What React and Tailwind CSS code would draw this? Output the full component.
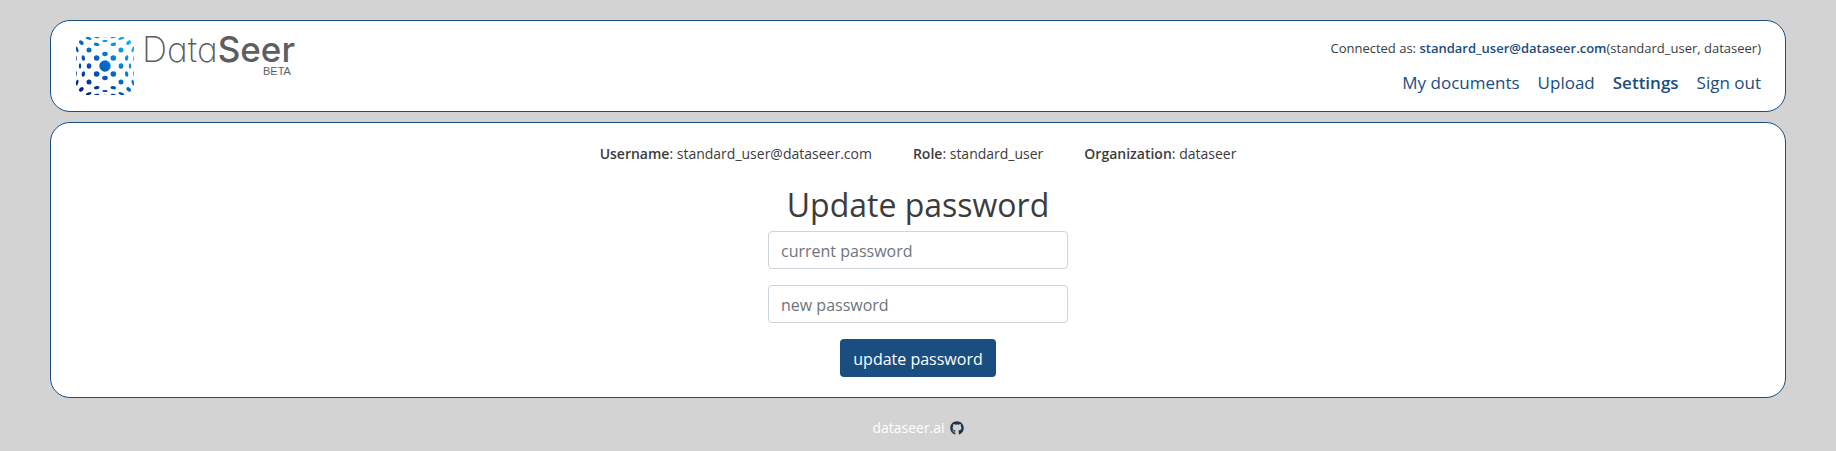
import { FaGithub } from "react-icons/fa";

// Ellipses of one quadrant, relative to the centre: [dx, dy, rx, ry, rotation].
const quadrant = [
  [0, 36, 8.5, 6.5, 0],
  [25, 24, 8.5, 8, 0],
  [48, 0, 7, 8, 0],
  [48, 48, 7.5, 7.5, 0],
  [25, 65, 8.5, 5, 8],
  [0, 75, 8.5, 3, 0],
  [65, 24, 5, 8.5, -8],
  [75, 0, 3.5, 8, 0],
  [71, 70, 8, 5.5, 45],
  [49, 83, 9, 4, 20],
  [25, 86, 8, 2.5, 8],
  [0, 87.5, 8, 1.2, 0],
  [84, 50, 3.8, 9, -16],
  [87, 24, 2.2, 8, -6],
  [88, 0, 1, 7, 0],
];

function Logo() {
  const dots = [];
  quadrant.forEach(([dx, dy, rx, ry, rot]) => {
    for (const sx of dx ? [-1, 1] : [1]) {
      for (const sy of dy ? [-1, 1] : [1]) {
        dots.push([dx * sx, dy * sy, rx, ry, rot * sx * sy]);
      }
    }
  });
  return (
    <svg viewBox="-87 -87 174 174" className="size-[58px] shrink-0" aria-hidden="true">
      <defs>
        <linearGradient id="logo" gradientUnits="userSpaceOnUse" x1="-78" y1="78" x2="78" y2="-78">
          <stop offset="0" stopColor="#001a8c" />
          <stop offset="0.5" stopColor="#0568c4" />
          <stop offset="1" stopColor="#00bdf8" />
        </linearGradient>
      </defs>
      <g fill="url(#logo)">
        <path
          d={
            "M-17 0a17 17 0 1 0 34 0a17 17 0 1 0 -34 0Z" +
            dots
              .map(([x, y, rx, ry, rot]) => {
                const a = (rot * Math.PI) / 180;
                const ux = rx * Math.cos(a);
                const uy = rx * Math.sin(a);
                return `M${x - ux} ${y - uy}A${rx} ${ry} ${rot} 1 0 ${x + ux} ${y + uy}A${rx} ${ry} ${rot} 1 0 ${x - ux} ${y - uy}Z`;
              })
              .join("")
          }
        />
      </g>
    </svg>
  );
}

const inputClass =
  "h-[38px] w-full rounded border border-[#ced4da] bg-white px-3 pt-0.5 text-base text-[#495057] placeholder:text-[#6c757d]";

function Info({ label, value }) {
  return (
    <div>
      <span className="font-semibold">{label}</span>: {value}
    </div>
  );
}

export default function App() {
  return (
    <div className="min-h-screen bg-[#d3d3d3] px-[50px] pt-5 pb-3 font-['Open_Sans',sans-serif] text-[#3c3c3c]">
      <header className="flex items-start justify-between rounded-[20px] border border-[#1a4d80] bg-white py-4 pr-6 pl-[25px]">
        <a href="#home" className="flex gap-2" aria-label="DataSeer beta">
          <Logo />
          <span className="flex flex-col items-end text-[#5e5e60]">
            <span className="font-['Inter',sans-serif] text-[35px] leading-6 font-extralight [font-feature-settings:'cv11']">
              Data<span className="font-medium">Seer</span>
            </span>
            <span className="pt-0.5 pr-1 font-['Liberation_Sans',sans-serif] text-[11px] leading-4">BETA</span>
          </span>
        </a>
        <div className="flex flex-col items-end gap-3">
          <div className="text-[13px] leading-[22px]">
            Connected as: <span className="font-semibold text-[#1a4d80]">standard_user@dataseer.com</span>
            (standard_user, dataseer)
          </div>
          <nav className="flex gap-[18px] text-[17px] leading-6 text-[#1a4d80]">
            <a href="#documents">My documents</a>
            <a href="#upload">Upload</a>
            <a href="#settings" className="font-semibold" aria-current="page">Settings</a>
            <a href="#signout">Sign out</a>
          </nav>
        </div>
      </header>

      <main className="mt-[10px] flex flex-col items-center rounded-[20px] border border-[#1a4d80] bg-white pt-5 pb-5">
        <div className="flex gap-[41px] text-sm leading-[22px]">
          <Info label="Username" value="standard_user@dataseer.com" />
          <Info label="Role" value="standard_user" />
          <Info label="Organization" value="dataseer" />
        </div>
        <h1 className="mt-5 text-[32px] leading-10">Update password</h1>
        <form className="mt-[6px] flex w-[300px] flex-col items-center gap-4" onSubmit={(e) => e.preventDefault()}>
          <input type="password" className={inputClass} placeholder="current password" aria-label="current password" />
          <input type="password" className={inputClass} placeholder="new password" aria-label="new password" />
          <button type="submit" className="h-[38px] rounded bg-[#1a4d80] px-[13px] pt-0.5 text-base text-white">
            update password
          </button>
        </form>
      </main>

      <footer className="mt-5 flex items-center justify-center gap-[5px] text-sm leading-5 text-white">
        <a href="#dataseer">dataseer.ai</a>
        <a href="#github" aria-label="GitHub" className="text-[#1f3547]">
          <FaGithub className="size-[14px]" />
        </a>
      </footer>
    </div>
  );
}
